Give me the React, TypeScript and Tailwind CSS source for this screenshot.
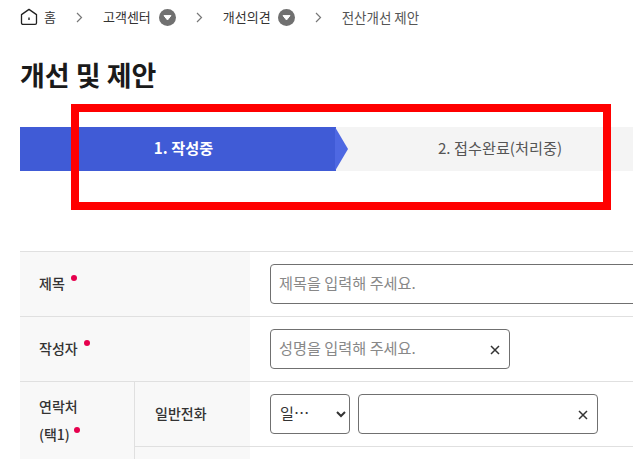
import type { ReactNode } from 'react';

const FONT = "font-['Noto_Sans_CJK_KR','Noto_Sans',sans-serif]";

function HomeIcon() {
  return (
    <svg width="18" height="18" viewBox="0 0 18 18" fill="none" className="text-[#222]">
      <path d="M1.5 6.6 9 1.4l7.5 5.2v8.4a1.4 1.4 0 0 1-1.4 1.4H2.9a1.4 1.4 0 0 1-1.4-1.4z" stroke="currentColor" strokeWidth="1.3" strokeLinejoin="round" />
      <path d="M9 9.4v2.6" stroke="currentColor" strokeWidth="1.4" />
    </svg>
  );
}

function Chevron() {
  return (
    <svg width="7" height="11" viewBox="0 0 7 11" fill="none" className="shrink-0">
      <path d="M1 1l4.5 4.5L1 10" stroke="#777" strokeWidth="1.2" />
    </svg>
  );
}

function DropBadge() {
  return (
    <svg width="17" height="17" viewBox="0 0 17 17" className="shrink-0">
      <circle cx="8.5" cy="8.5" r="8.5" fill="#707070" />
      <path d="M5 6.6h7L8.5 11z" fill="#fff" stroke="#fff" strokeWidth="1" strokeLinejoin="round" />
    </svg>
  );
}

function ClearIcon() {
  return (
    <svg width="10" height="10" viewBox="0 0 10 10" fill="none">
      <path d="M1 1l8 8M9 1l-8 8" stroke="#333" strokeWidth="1.5" />
    </svg>
  );
}

function Dot() {
  return <span className="ml-[6px] inline-block size-[6px] -translate-y-[5px] rounded-full bg-[#e6004d] align-middle" />;
}

function TextField({ placeholder, width, clear }: { placeholder?: string; width: string; clear?: boolean }) {
  return (
    <div className={`relative h-10 shrink-0 ${width}`}>
      <input
        placeholder={placeholder}
        className="h-full w-full rounded-[4px] border border-[#707070] bg-white pr-8 pb-[5px] pl-[8px] text-[15.2px] outline-none placeholder:text-[#888]"
      />
      {clear ? (
        <span className="absolute top-[16px] right-[10px] flex">
          <ClearIcon />
        </span>
      ) : null}
    </div>
  );
}

function Row({ label, children }: { label: ReactNode; children: ReactNode }) {
  return (
    <div className="flex h-[65px] border-t border-[#e0e0e0]">
      <div className="flex w-[230px] shrink-0 items-center bg-[#f8f8f8] pb-[3px] pl-[19px] text-sm font-medium text-[#333]">{label}</div>
      <div className="flex flex-1 items-center pl-5">{children}</div>
    </div>
  );
}

export default function App() {
  return (
    <div className={`relative h-[459px] w-[633px] overflow-hidden bg-white ${FONT}`}>
      <nav className="flex h-[34px] items-center pl-5 text-[13px] text-[#333]">
        <HomeIcon />
        <span className="ml-[6px]">홈</span>
        <span className="ml-[20px]"><Chevron /></span>
        <span className="ml-[20px]">고객센터</span>
        <span className="ml-2"><DropBadge /></span>
        <span className="ml-[20px]"><Chevron /></span>
        <span className="ml-[20px]">개선의견</span>
        <span className="ml-[7px]"><DropBadge /></span>
        <span className="ml-[20px]"><Chevron /></span>
        <span className="ml-[20px] text-[13.5px] text-[#555]">전산개선 제안</span>
      </nav>

      <h1 className="mt-[21px] pl-5 text-[27px] leading-10 font-bold text-[#1a1a1a]">개선 및 제안</h1>

      <div className="mt-[32px] ml-5 flex h-11 w-[640px] bg-[#f4f4f4]">
        <div className="relative flex w-[316px] shrink-0 items-center justify-center bg-[#405bd6] pb-[3px] pl-[11px] text-[15.2px] font-bold text-white">
          1. 작성중
          <svg width="14" height="44" viewBox="0 0 14 44" className="absolute top-0 left-full -ml-px">
            <path d="M0 0l13 22L0 44z" fill="#4e68e2" />
          </svg>
        </div>
        <div className="flex flex-1 items-center justify-center pb-[3px] pl-[4px] text-[15.2px] text-[#555]">2. 접수완료(처리중)</div>
      </div>

      <div className="mt-[80px] ml-5 w-[640px]">
        <Row
          label={
            <>
              제목
              <Dot />
            </>
          }
        >
          <TextField placeholder="제목을 입력해 주세요." width="w-[370px]" />
        </Row>
        <Row
          label={
            <>
              작성자
              <Dot />
            </>
          }
        >
          <TextField placeholder="성명을 입력해 주세요." width="w-60" clear />
        </Row>
        <div className="flex border-t border-[#e0e0e0]">
          <div className="w-[114px] shrink-0 bg-[#f8f8f8] pt-[10px] pl-[19px] text-sm leading-7 font-medium text-[#333]">
            연락처
            <br />
            (택1)
            <span className="ml-1 inline-block size-[6px] -translate-y-[6px] rounded-full bg-[#e6004d] align-middle" />
          </div>
          <div className="flex-1 border-l border-[#e0e0e0]">
            <div className="flex h-[64px]">
              <div className="flex w-[115px] shrink-0 items-center bg-[#f8f8f8] pb-[3px] pl-5 text-sm font-medium text-[#333]">일반전화</div>
              <div className="flex flex-1 items-center gap-2 pl-5">
                <select className="h-10 w-20 shrink-0 truncate rounded-[4px] border border-[#707070] bg-white pr-[20px] pb-[5px] pl-[5px] text-[15.2px] text-[#333] outline-none">
                  <option>일반전화</option>
                </select>
                <TextField width="w-60" clear />
              </div>
            </div>
            <div className="flex h-[65px] border-t border-[#e0e0e0]">
              <div className="w-[115px] shrink-0 bg-[#f8f8f8]" />
            </div>
          </div>
        </div>
      </div>

      <div className="absolute top-[104px] left-[71px] h-[106px] w-[540px] border-8 border-[#ff0000]" />
    </div>
  );
}
